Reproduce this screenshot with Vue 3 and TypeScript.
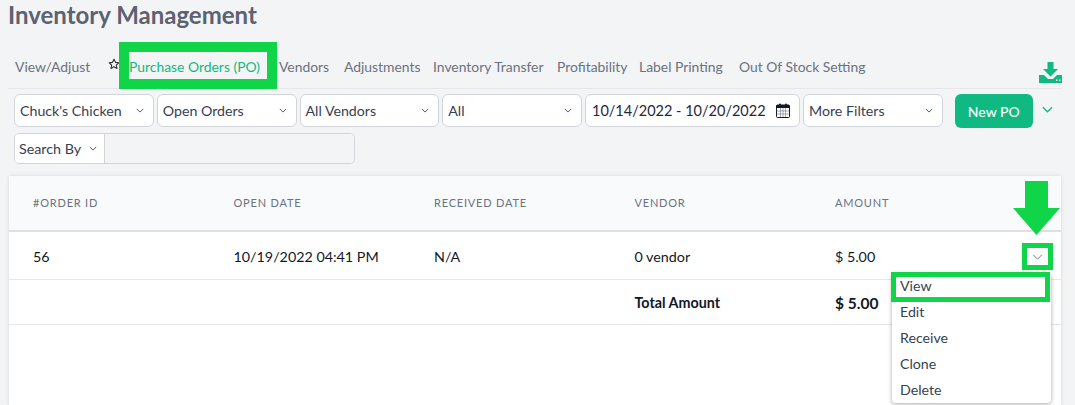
<script setup lang="ts">
const tabs = [
  { label: 'Vendors', w: 65 },
  { label: 'Adjustments', w: 89 },
  { label: 'Inventory Transfer', w: 124 },
  { label: 'Profitability', w: 82 },
  { label: 'Label Printing', w: 100 },
  { label: 'Out Of Stock Setting', w: 130 },
]
const selects = ["Chuck's Chicken", 'Open Orders', 'All Vendors', 'All']
const cols = ['#ORDER ID', 'OPEN DATE', 'RECEIVED DATE', 'VENDOR', 'AMOUNT']
const row = ['56', '10/19/2022 04:41 PM', 'N/A', '0 vendor', '$ 5.00']
const menu = ['View', 'Edit', 'Receive', 'Clone', 'Delete']
</script>

<template>
  <div class="page">
    <h1 class="title">Inventory Management</h1>
    <div class="tabs">
      <span class="tab first">View/Adjust</span>
      <svg class="star" viewBox="0 0 24 24" width="12" height="12"><path d="M12 2.500l2.900 6.200 6.700.8-5 4.600 1.400 6.700L12 17.400l-6 3.400 1.400-6.700-5-4.600 6.700-.8z" fill="none" stroke="#333" stroke-width="2.200" stroke-linejoin="round"/></svg>
      <span class="tab active">
        Purchase Orders (PO)
        <i class="mark tab-mark"></i>
      </span>
      <span v-for="t in tabs" :key="t.label" class="tab" :style="{ width: t.w + 'px' }">{{ t.label }}</span>
      <svg class="download" viewBox="0 0 23 21" width="23" height="21">
        <path d="M8.500 0h6v7h4.500l-7.500 7.500L4 7h4.500z" fill="#10b981"/>
        <path d="M0 13h5l4 4h5l4-4h5v8H0z" fill="#10b981"/>
        <rect x="17" y="17.500" width="1.500" height="1.500" fill="#f3f4f6"/>
        <rect x="20" y="17.500" width="1.500" height="1.500" fill="#f3f4f6"/>
      </svg>
    </div>
    <div class="filters">
      <div v-for="s in selects" :key="s" class="select">
        <span>{{ s }}</span>
        <svg class="chev" viewBox="0 0 10 6" width="8" height="5"><path d="M1 1l4 4 4-4" fill="none" stroke="#4b5563" stroke-width="1.200"/></svg>
      </div>
      <div class="select date">
        <span>10/14/2022 - 10/20/2022</span>
        <svg viewBox="0 0 14 15" width="14" height="15">
          <rect x="0.500" y="2" width="13" height="12.500" rx="1" fill="#fff" stroke="#111827"/>
          <rect x="0.500" y="2" width="13" height="3" fill="#111827"/>
          <rect x="3" y="0.500" width="2" height="3" rx="1" fill="#111827"/>
          <rect x="9" y="0.500" width="2" height="3" rx="1" fill="#111827"/>
          <path d="M0.500 8h13M0.500 11h13M4.500 5v9M7 5v9M9.500 5v9" stroke="#6b7280" stroke-width="0.600"/>
        </svg>
      </div>
      <div class="select">
        <span>More Filters</span>
        <svg class="chev" viewBox="0 0 10 6" width="8" height="5"><path d="M1 1l4 4 4-4" fill="none" stroke="#4b5563" stroke-width="1.200"/></svg>
      </div>
      <button class="new-po">New PO</button>
      <svg class="new-chev" viewBox="0 0 12 7" width="11" height="7"><path d="M1 1l5 5 5-5" fill="none" stroke="#10b981" stroke-width="1.400"/></svg>
    </div>
    <div class="search">
      <div class="search-by">
        <span>Search By</span>
        <svg class="chev" viewBox="0 0 10 6" width="8" height="5"><path d="M1 1l4 4 4-4" fill="none" stroke="#4b5563" stroke-width="1.200"/></svg>
      </div>
      <div class="search-input"></div>
    </div>
    <div class="card">
      <div class="grid head">
        <span v-for="c in cols" :key="c">{{ c }}</span>
      </div>
      <div class="grid body-row">
        <span v-for="c in row" :key="c">{{ c }}</span>
        <div class="action">
          <svg viewBox="0 0 12 7" width="11" height="6"><path d="M1 1l5 5 5-5" fill="none" stroke="#6b7280" stroke-width="1.100"/></svg>
          <i class="mark action-mark"></i>
          <svg class="arrow" viewBox="0 0 47 54" width="47" height="54"><path d="M12 0h23v27h12L23.500 54 0 27h12z" fill="#10d549"/></svg>
        </div>
        <ul class="menu">
          <li v-for="m in menu" :key="m">{{ m }}</li>
          <i class="mark menu-mark"></i>
        </ul>
      </div>
      <div class="grid total-row">
        <span></span><span></span><span></span>
        <b>Total Amount</b>
        <b class="total-num">$ 5.00</b>
      </div>
    </div>
  </div>
</template>

<style scoped>
.page {
  width: 1075px;
  height: 405px;
  overflow: hidden;
  background: #f3f4f6;
  font-family: "Lato", "Liberation Sans", sans-serif;
  color: #1f2937;
  box-sizing: border-box;
}
.title {
  margin: 0;
  padding: 1px 0 0 8px;
  height: 42px;
  box-sizing: border-box;
  font-size: 24px;
  line-height: 28px;
  font-weight: 700;
  color: #5b6271;
}
.tabs {
  display: flex;
  align-items: center;
  height: 47px;
  margin: 0 13px 0 8px;
  border-bottom: 1px solid #e5e7eb;
  padding: 3px 0 0 7px;
  box-sizing: border-box;
  font-size: 13.900px;
  color: #6b7280;
}
.tab { white-space: nowrap; flex: none; }
.tab.first { width: 93px; }
.star { flex: none; margin: 0 9px 5px 0; }
.active {
  position: relative;
  width: 150px;
  align-self: stretch;
  display: flex;
  align-items: center;
  color: #10b981;
}
.mark { position: absolute; display: block; border-style: solid; border-color: #10d549; box-sizing: border-box; pointer-events: none; }
.tab-mark { left: -10px; top: -3px; width: 158px; height: 47px; border-width: 10px; }
.download { margin-left: auto; margin-top: 12px; flex: none; }
.filters {
  display: flex;
  align-items: flex-start;
  gap: 3px;
  padding: 5px 0 0 14px;
}
.select {
  flex: none;
  width: 139.750px;
  height: 33px;
  box-sizing: border-box;
  display: flex;
  align-items: center;
  justify-content: space-between;
  padding: 0 9px 0 5px;
  background: #fff;
  border: 1px solid #d1d5db;
  border-radius: 6px;
  font-size: 14.200px;
  color: #374151;
  white-space: nowrap;
}
.date { width: 215px; padding: 0 9px 0 6px; font-size: 14.500px; color: #1f2937; }
.new-po {
  flex: none;
  margin-left: 9px;
  width: 78px;
  height: 34px;
  border: 0;
  border-radius: 6px;
  background: #10b981;
  color: #fff;
  font: 500 14px "Lato", sans-serif;
}
.new-chev { flex: none; margin: 11.500px 0 0 6.500px; }
.search {
  display: flex;
  width: 341px;
  height: 31px;
  margin: 5px 0 0 14px;
  border: 1px solid #d1d5db;
  border-radius: 5px;
  box-sizing: border-box;
  overflow: hidden;
}
.search-by {
  width: 90px;
  flex: none;
  display: flex;
  align-items: center;
  justify-content: space-between;
  padding: 0 7px 0 4px;
  box-sizing: border-box;
  background: #fff;
  border-right: 1px solid #d1d5db;
  font-size: 14.300px;
  color: #374151;
}
.search-input { flex: 1; background: #f3f4f6; }
.card {
  width: 1052px;
  height: 229px;
  margin: 12px 0 0 9px;
  background: #fff;
  box-shadow: 0 0 4px rgba(0, 0, 0, 0.12);
}
.grid {
  display: grid;
  grid-template-columns: repeat(5, 200.500px);
  padding-left: 24px;
  align-items: center;
  position: relative;
  box-sizing: border-box;
}
.head {
  height: 56px;
  padding-bottom: 2px;
  background: #f9fafb;
  border-bottom: 2px solid #e0e0e0;
  font-size: 11px;
  letter-spacing: 0.800px;
  color: #6b7280;
}
.body-row {
  height: 48px;
  padding-top: 1px;
  border-bottom: 1px solid #e5e7eb;
  font-size: 14.300px;
  color: #111827;
}
.total-row {
  height: 45px;
  padding-top: 1px;
  border-bottom: 1px solid #e5e7eb;
  font-size: 14.300px;
  color: #111827;
}
.total-num { font-size: 15.500px; }
.action {
  position: absolute;
  left: 1018px;
  top: 16px;
  width: 21px;
  height: 17px;
  display: flex;
  align-items: center;
  justify-content: center;
}
.action-mark { left: -5px; top: -5px; width: 31px; height: 27px; border-width: 5px; }
.arrow { position: absolute; left: -14px; top: -67px; }
.menu {
  position: absolute;
  left: 883px;
  top: 41px;
  width: 159px;
  height: 130px;
  margin: 0;
  padding: 0;
  list-style: none;
  background: #fff;
  border-radius: 4px;
  box-shadow: 0 1px 4px rgba(0, 0, 0, 0.35);
  z-index: 5;
  font-size: 14.200px;
  color: #374151;
}
.menu li {
  height: 26px;
  line-height: 26px;
  padding-left: 8px;
}
.menu-mark { left: -1px; top: -1px; width: 159px; height: 30px; border-width: 5px; }
</style>
